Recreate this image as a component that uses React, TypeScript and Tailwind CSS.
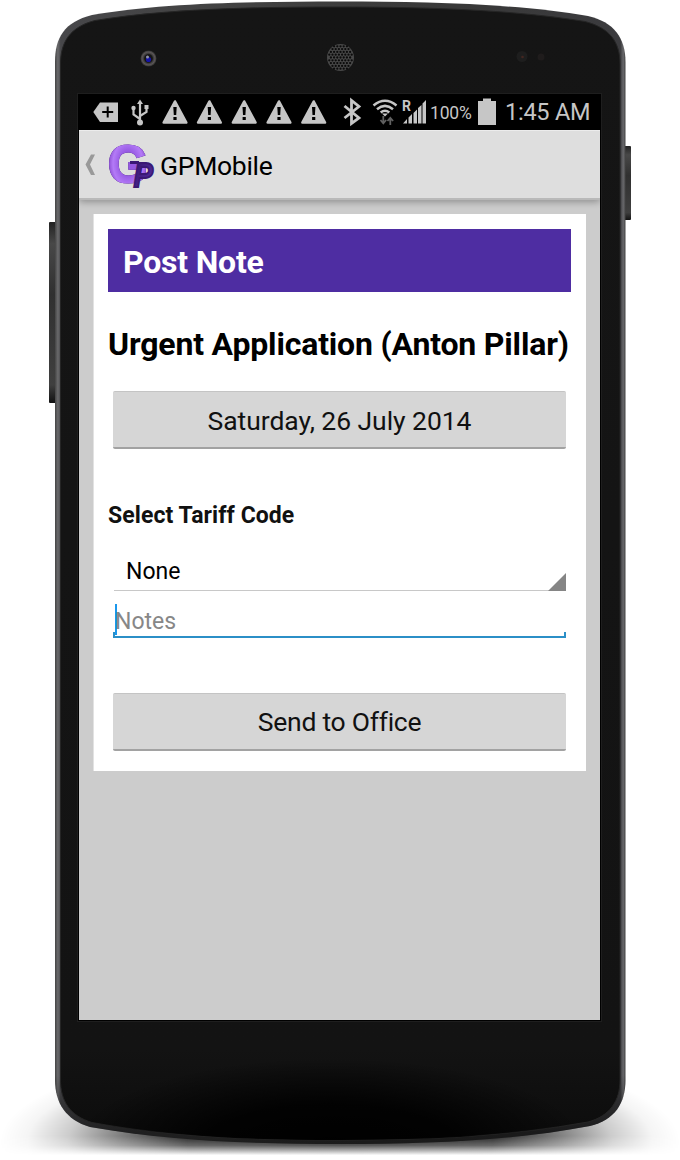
import React from 'react';

const BODY =
  'M55 62C55 38 64 22 92 15C160 3 250 1.500 340 1.500C430 1.500 520 4 588 16C614 22 625.500 38 625.500 62V1080C625.500 1103 615 1120 590 1126C510 1141 430 1144 340 1144C250 1144 170 1141 90 1127C66 1120 55 1103 55 1080Z';
const FACE =
  'M60.500 64C60.500 42 70 27 95 20.500C165 9 250 7 340 7C430 7 515 10 585 21.500C610 28 620 42 620 64V1080C620 1101 610 1116 588 1122C510 1136 430 1140 340 1140C250 1140 172 1137 92 1122.500C70 1116 60.500 1101 60.500 1080Z';

const grille: number[][] = [
  [-4, 5], [-3, 6], [-2, 7], [-1, 8], [0, 7], [1, 8], [2, 7], [3, 6], [4, 5],
];

function PhoneBody() {
  return (
    <svg className="absolute inset-0" width="680" height="1160" viewBox="0 0 680 1160">
      <defs>
        <linearGradient id="rim" x1="0" x2="1" y1="0" y2="0">
          <stop offset="0" stopColor="#444" />
          <stop offset="0.005" stopColor="#6a6a6c" />
          <stop offset="0.01" stopColor="#47474a" />
          <stop offset="0.3" stopColor="#424242" />
          <stop offset="0.7" stopColor="#383838" />
          <stop offset="0.991" stopColor="#3b3b3e" />
          <stop offset="0.996" stopColor="#68686b" />
          <stop offset="1" stopColor="#444" />
        </linearGradient>
        <linearGradient id="rimShade" x1="0" x2="0" y1="0" y2="1">
          <stop offset="0.94" stopColor="#000" stopOpacity="0" />
          <stop offset="0.99" stopColor="#000" stopOpacity="0.55" />
        </linearGradient>
        <linearGradient id="face" x1="0" x2="0" y1="0" y2="1">
          <stop offset="0" stopColor="#151515" />
          <stop offset="0.92" stopColor="#131313" />
          <stop offset="1" stopColor="#0c0c0c" />
        </linearGradient>
        <radialGradient id="dark">
          <stop offset="0" stopColor="#000" />
          <stop offset="0.5" stopColor="#000" stopOpacity="0.85" />
          <stop offset="1" stopColor="#000" stopOpacity="0" />
        </radialGradient>
        <linearGradient id="key" x1="0" x2="0" y1="0" y2="1">
          <stop offset="0" stopColor="#222" />
          <stop offset="0.12" stopColor="#484848" />
          <stop offset="0.4" stopColor="#303030" />
          <stop offset="0.9" stopColor="#3f3f3f" />
          <stop offset="1" stopColor="#111" />
        </linearGradient>
        <radialGradient id="lens">
          <stop offset="0" stopColor="#111" />
          <stop offset="0.45" stopColor="#242424" />
          <stop offset="0.8" stopColor="#5a5656" />
          <stop offset="1" stopColor="#303030" />
        </radialGradient>
        <linearGradient id="floorFade" x1="0" x2="0" y1="1040" y2="1160" gradientUnits="userSpaceOnUse">
          <stop offset="0" stopColor="#fff" />
          <stop offset="0.8" stopColor="#fff" />
          <stop offset="0.88" stopColor="#b0b0b0" />
          <stop offset="0.96" stopColor="#000" />
        </linearGradient>
        <mask id="floor" maskUnits="userSpaceOnUse" x="0" y="1040" width="680" height="120">
          <rect x="0" y="1040" width="680" height="120" fill="url(#floorFade)" />
        </mask>
        <radialGradient id="pool">
          <stop offset="0" stopColor="#000" stopOpacity="0.95" />
          <stop offset="0.45" stopColor="#000" stopOpacity="0.85" />
          <stop offset="0.65" stopColor="#000" stopOpacity="0.5" />
          <stop offset="0.8" stopColor="#000" stopOpacity="0.2" />
          <stop offset="0.92" stopColor="#000" stopOpacity="0.04" />
          <stop offset="1" stopColor="#000" stopOpacity="0" />
        </radialGradient>
        <clipPath id="faceClip"><path d={FACE} /></clipPath>
      </defs>
      <g mask="url(#floor)">
        <ellipse cx="340" cy="1142" rx="340" ry="98" fill="url(#pool)" />
      </g>
      <rect x="49" y="222" width="8" height="181" rx="1" fill="url(#key)" />
      <rect x="624" y="146" width="7" height="74" rx="1" fill="url(#key)" />
      <path d={BODY} fill="url(#rim)" />
      <path d={BODY} fill="url(#rimShade)" />
      <path d={FACE} fill="url(#face)" stroke="#252525" strokeWidth="1" />
      <ellipse cx="330" cy="1150" rx="260" ry="92" fill="url(#dark)" clipPath="url(#faceClip)" />
      <rect x="77.500" y="93.500" width="524" height="928" fill="#000" stroke="#1e1e1e" />
      <circle cx="148.500" cy="58.500" r="8" fill="url(#lens)" />
      <circle cx="148.500" cy="58.500" r="4.200" fill="#151516" />
      <circle cx="148.500" cy="59.500" r="2.600" fill="#1413a5" />
      <circle cx="147.500" cy="57" r="1.500" fill="#8f93a8" />
      <circle cx="340.500" cy="57.500" r="13.500" fill="#484848" />
      {grille.map(([row, n]) =>
        Array.from({ length: n }, (_, i) => (
          <circle key={`${row}-${i}`} cx={340.5 + (i - (n - 1) / 2) * 3.2} cy={57.5 + row * 2.8} r="1.150" fill="#0b0b0b" />
        )),
      )}
      <circle cx="522" cy="56.500" r="5.500" fill="#1e1e1e" />
      <circle cx="522.500" cy="57" r="1.300" fill="#442620" />
      <circle cx="541" cy="57" r="3.500" fill="#1f1c1c" />
    </svg>
  );
}

const warnings = [96, 130.4, 165.2, 200, 234.7];

function Notifications() {
  return (
    <svg width="290" height="36" viewBox="0 0 290 36" className="shrink-0" fill="#c6c6c6">
      <path d="M14.300 18L21 8.500H39V28H21Z" />
      <path d="M28.700 12.500V23.500M23.200 18H34.200" stroke="#000" strokeWidth="2" />
      <path d="M61 5.500L64 10H58Z" />
      <circle cx="61" cy="28.500" r="3" />
      <path d="M61 8V28M61 25L54.500 20.500V14M61 22L67.500 18V13" fill="none" stroke="#c6c6c6" strokeWidth="2.200" />
      <circle cx="54.500" cy="14" r="2.200" />
      <rect x="65.500" y="11" width="4" height="4" />
      {warnings.map((x) => (
        <g key={x} transform={`translate(${x} 0)`}>
          <path d="M0 7.500L11.300 28.500H-11.300Z" stroke="#c6c6c6" strokeWidth="2.600" strokeLinejoin="round" />
          <path d="M-1.700 13H1.700L1.200 21H-1.200ZM-1.600 23H1.600V26H-1.600Z" fill="#000" />
        </g>
      ))}
      <path d="M265.500 12L280 24L272.500 29.500V6.500L280 12.500L265.500 24" fill="none" stroke="#c6c6c6" strokeWidth="2.800" />
    </svg>
  );
}

function Signals() {
  return (
    <svg width="59" height="36" viewBox="290 0 59 36" className="shrink-0" fill="#c6c6c6">
      <g fill="none" stroke="#c6c6c6" strokeWidth="2.500">
        <path d="M294.500 11.500Q306 2 317.500 11.500" />
        <path d="M298 15.200Q306 8.500 314 15.200" />
        <path d="M301.700 18.500Q306 15 310.300 18.500" />
      </g>
      <path d="M303 19.500H309L306 22.500Z" />
      <path d="M304.300 22V29M301.500 26L304.300 29.300L307.100 26M311.300 31V24M308.500 27L311.300 23.800L314.100 27" stroke="#606060" strokeWidth="1.800" fill="none" />
      <text x="323" y="17" className="font-[Roboto] text-[14px] font-bold">R</text>
      <path d="M324 29.500L328 25V29.500ZM329.500 23.500L333 20V29.500H329.500ZM334.500 19L338 15.500V29.500H334.500ZM339 14L342.500 11V29.500H339ZM343.500 9.500L347 6V29.500H343.500Z" />
    </svg>
  );
}

function StatusBar() {
  return (
    <div className="flex h-9 bg-black text-[#c6c6c6]">
      <Notifications />
      <Signals />
      <span className="ml-[2px] mt-[9px] w-[48px] text-[17.5px] leading-[20px] tracking-[-0.2px]">100%</span>
      <svg width="18" height="36" viewBox="0 0 18 36" className="shrink-0">
        <path d="M0 7H5V4.500H13V7H18V31H0Z" fill="#c6c6c6" />
      </svg>
      <span className="ml-[9px] mt-[4px] whitespace-nowrap text-[23.5px] leading-[29px] tracking-[-0.25px]">1:45 AM</span>
    </div>
  );
}

function Logo() {
  return (
    <svg width="50" height="52" viewBox="107 140 50 52" className="shrink-0 overflow-visible">
      <defs>
        <radialGradient id="g">
          <stop offset="0.4" stopColor="#9558e2" />
          <stop offset="0.75" stopColor="#b47bf7" />
          <stop offset="1" stopColor="#8648cd" />
        </radialGradient>
        <linearGradient id="p" x1="0" y1="0" x2="1" y2="1">
          <stop offset="0" stopColor="#341365" />
          <stop offset="1" stopColor="#5730ad" />
        </linearGradient>
      </defs>
      <text x="108" y="181.500" textLength="40" lengthAdjust="spacingAndGlyphs" fill="url(#g)" stroke="url(#g)" strokeWidth="2.200" className="font-['Liberation_Sans'] text-[52px] font-bold drop-shadow-[0_0_0.7px_#35156a]">G</text>
      <text x="133.500" y="186.500" textLength="19.500" lengthAdjust="spacingAndGlyphs" fill="url(#p)" stroke="#3b1875" strokeWidth="2" className="font-['Liberation_Sans'] text-[35px] font-bold italic">P</text>
      <path d="M130 162.500H139" stroke="#3b1875" strokeWidth="3" />
    </svg>
  );
}

function AppBar() {
  return (
    <header className="relative flex h-[70px] items-start border-b-2 border-t border-b-[#b9b9b9] border-t-[#ececec] bg-[#dedede] shadow-[0_2px_7px_rgba(0,0,0,0.3)]">
      <svg width="12" height="24" viewBox="0 0 12 24" className="ml-[5px] mt-[22px] shrink-0">
        <path d="M7 1.500H11L6 11.500L11 22H7L1.500 11.500Z" fill="#999" />
      </svg>
      <div className="ml-[11px] mt-[9px]"><Logo /></div>
      <h1 className="ml-[3px] mt-[19px] text-[26.500px] leading-[32px] tracking-[-0.3px] text-black">GPMobile</h1>
    </header>
  );
}

function GreyButton({ children, className }: { children: React.ReactNode; className: string }) {
  return (
    <button className={`ml-[5px] block h-[58px] w-[453px] rounded-[2px] border-b-2 border-t border-b-[#a2a2a2] border-t-[#c4c4c4] bg-[#d6d6d6] text-[26.5px] leading-[54px] text-[#111] ${className}`}>
      {children}
    </button>
  );
}

export default function App() {
  return (
    <div className="relative h-[1160px] w-[680px] overflow-hidden bg-white font-['Roboto',sans-serif]">
      <PhoneBody />
      <div className="relative pl-[79px] pt-[94px]">
        <div className="h-[926px] w-[521px] overflow-hidden bg-[#ccc]">
          <StatusBar />
          <AppBar />
          <main className="ml-[14px] mt-[14px] h-[557px] w-[493px] border-l border-[#e2e2e2] bg-white pl-[14px] pr-[15px] pt-[15px]">
            <h2 className="h-[63px] w-[463px] bg-[#4e2da2] pl-[15px] text-[32px] font-bold leading-[66px] tracking-[-0.2px] text-white">Post Note</h2>
            <h3 className="mt-[32px] h-[40px] whitespace-nowrap text-[32px] font-bold leading-[40px] tracking-[-0.17px] text-black">Urgent Application (Anton Pillar)</h3>
            <div className="mt-[27px]"><GreyButton className="pt-[2px] tracking-[-0.05px]">Saturday, 26 July 2014</GreyButton></div>
            <p className="mt-[50px] h-[30px] text-[23px] font-bold leading-[34px] tracking-[0.08px] text-[#111]">Select Tariff Code</p>
            <div className="ml-[6px] mr-[5px] mt-[21px] flex h-[41px] items-start justify-between border-b border-[#c8c8c8]">
              <span className="ml-[12px] mt-[8px] text-[23px] leading-[28px] text-black">None</span>
              <svg width="18" height="18" viewBox="0 0 18 18" className="mt-[23px]"><path d="M18 0V18H0Z" fill="#858585" /></svg>
            </div>
            <div className="ml-[5px] mr-[5px] mt-[12px] h-[35px]">
              <div className="flex h-[30px] items-start">
                <i className="ml-[2px] mt-[1px] h-[31px] w-[2px] shrink-0 bg-[#1b97ec]" />
                <span className="-ml-[2px] mt-[5px] text-[23px] leading-[28px] text-[#878787]">Notes</span>
              </div>
              <div className="-mt-px h-[6px] border-x-2 border-b-2 border-[#2b8fc7]" />
            </div>
            <div className="mt-[55px]"><GreyButton className="pt-px tracking-[-0.25px]">Send to Office</GreyButton></div>
          </main>
        </div>
      </div>
    </div>
  );
}
